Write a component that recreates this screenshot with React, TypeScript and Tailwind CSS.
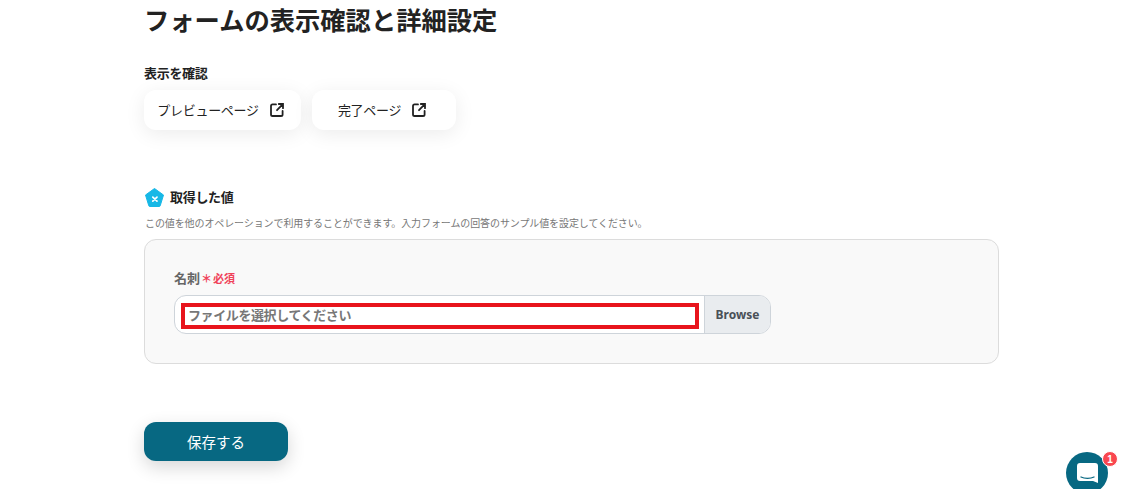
import React from 'react';

const jp = { fontFamily: '"Noto Sans CJK JP", sans-serif' };

const ExternalIcon: React.FC = () => (
  <svg width="14" height="14" viewBox="0 0 14 14" fill="none" stroke="#222" strokeWidth="1.8" strokeLinecap="round">
    <path d="M6 1.4H2.6a1.6 1.6 0 0 0-1.6 1.6v8.400A1.6 1.6 0 0 0 2.6 13H11a1.600 1.600 0 0 0 1.600-1.600V8" />
    <path d="M7 7.2 12.6 1.4M8.800 1h4.200v4.200" />
  </svg>
);

const App: React.FC = () => {
  return (
    <div className="relative h-[489px] w-[1128px] overflow-hidden bg-white text-[#222]" style={jp}>
      <div className="ml-[144px] w-[855px]">
        {/* Header */}
        <h1 className="m-0 -mt-px h-[41px] text-[25.3px] leading-[41px] font-bold text-[#222]">フォームの表示確認と詳細設定</h1>

        {/* Preview links */}
        <div className="mt-[23px] h-[20px] text-[13px] leading-[20px] font-bold tracking-[-0.3px]">表示を確認</div>
        <div className="mt-[7px] flex gap-[11px]">
          <button className="flex h-[40px] w-[157px] items-center justify-center gap-[11px] rounded-xl bg-white pr-[4px] text-[13px] tracking-[-0.3px] shadow-[0_4px_20px_rgba(0,0,0,0.08)]">
            <span>プレビューページ</span>
            <ExternalIcon />
          </button>
          <button className="flex h-[40px] w-[144px] items-center justify-center gap-[11px] rounded-xl bg-white pr-[4px] text-[13px] tracking-[-0.3px] shadow-[0_4px_20px_rgba(0,0,0,0.08)]">
            <span>完了ページ</span>
            <ExternalIcon />
          </button>
        </div>

        {/* Values */}
        <div className="mt-[57px] flex h-[20px] items-center gap-[6px] pl-px">
          <svg width="19" height="19" viewBox="0 0 19 19">
            <path d="M9.500 0.500 18.500 7 15.200 17.800a1 1 0 0 1-1 .7H4.800a1 1 0 0 1-1-.7L0.500 7Z" fill="#17b8e6" stroke="#17b8e6" strokeLinejoin="round" />
            <path d="M7.800 9.200 12 13.200M12 9.200 7.800 13.200" stroke="#fff" strokeWidth="1.700" strokeLinecap="round" />
          </svg>
          <span className="text-[13px] leading-[20px] font-bold tracking-[-0.3px]">取得した値</span>
        </div>
        <p className="mt-[8px] h-[16px] pl-px text-[10px] leading-[16px] tracking-[-0.1px] text-[#777]">この値を他のオペレーションで利用することができます。入力フォームの回答のサンプル値を設定してください。</p>

        <div className="mt-[8px] h-[125px] rounded-xl border border-[#dcdcdc] bg-[#f9f9f9] pt-[28px] pl-[29px]">
          <div className="flex h-[20px] items-center text-[13px] leading-[20px] font-bold text-[#666]">
            <span>名刺</span>
            <span className="ml-[1px] text-[11px] text-[#f0435a]">＊</span>
            <span className="ml-[1px] text-[11px] text-[#f0435a]">必須</span>
          </div>
          <div className="relative mt-[7px] flex h-[39px] w-[597px] overflow-hidden rounded-xl border border-[#ced4da] bg-white">
            <div className="flex-1 pl-[13px] text-[13px] leading-[37px] font-bold tracking-[-0.4px] text-[#777]">ファイルを選択してください</div>
            <div className="flex w-[66px] items-center justify-center border-l border-[#ced4da] bg-[#e9ecef] text-[12px] font-bold text-[#495057]" style={{ fontFamily: '"Noto Sans", sans-serif' }}>Browse</div>
            {/* annotation frame */}
            <div className="absolute top-[7px] left-[6px] h-[26px] w-[518px] border-[4px] border-[#e8141c]" />
          </div>
        </div>

        <button className="mt-[58px] h-[39px] w-[144px] rounded-xl bg-[#076882] text-[14.5px] text-white shadow-[0_6px_18px_rgba(0,0,0,0.16)]">保存する</button>
      </div>

      {/* Chat launcher */}
      <div className="absolute top-[452px] left-[1066px] flex h-[42px] w-[42px] items-center justify-center rounded-full bg-[#076882]">
        <svg width="21" height="20" viewBox="0 0 21 20" className="ml-px -mt-[1px]">
          <path d="M3 0h15a3 3 0 0 1 3 3v17l-5-2H3a3 3 0 0 1-3-3V3a3 3 0 0 1 3-3Z" fill="#fff" />
          <path d="M4 14c3.500 1.800 9.500 1.800 13 0" fill="none" stroke="#076882" strokeWidth="1.300" strokeLinecap="round" />
        </svg>
      </div>
      <div className="absolute top-[451px] left-[1102px] flex h-[16px] w-[16px] items-center justify-center rounded-full border border-white bg-[#f9474f] text-[10px] font-bold text-white" style={{ fontFamily: '"Liberation Sans", sans-serif' }}>1</div>
    </div>
  );
};

export default App;
